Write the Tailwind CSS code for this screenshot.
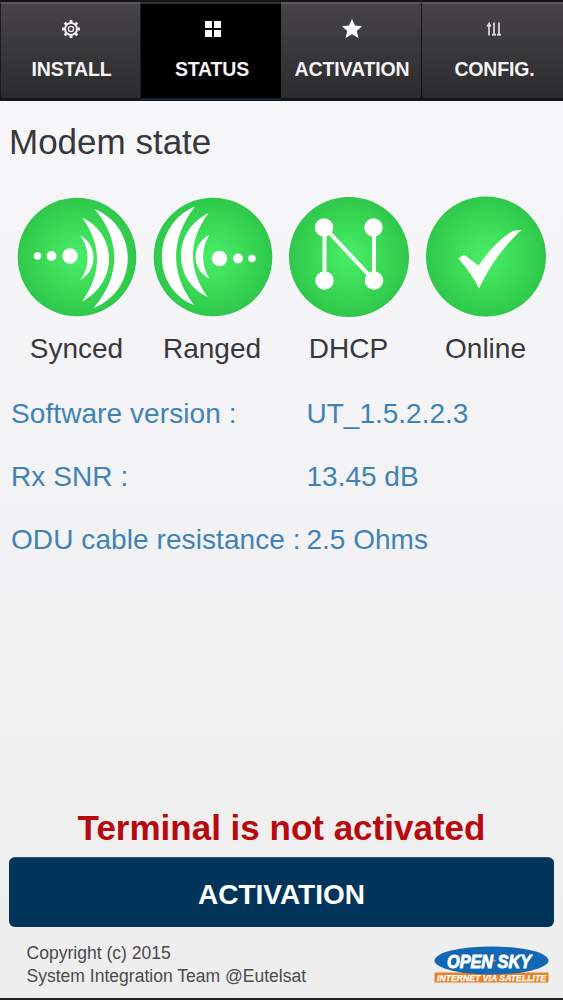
<!DOCTYPE html>
<html lang="en">
<head>
<meta charset="utf-8">
<title>Modem state</title>
<script src="https://cdn.jsdelivr.net/npm/@tailwindcss/browser@4"></script>
</head>
<body class="font-['Liberation_Sans',Arial,sans-serif] bg-[#f2f2f4]">
<main class="w-[563px] h-[1000px] flex flex-col overflow-hidden bg-linear-to-b from-[#f8f8fa] via-[#f3f2f4] to-[#eeeeee] border-b-2 border-[#242428] text-[#38373b]">
  <nav class="h-[101px] shrink-0 grid grid-cols-[141px_140px_140px_142px] bg-[#151417] pt-[2px] pb-[3px] text-[#f5f3f6] font-bold text-[19.500px] tracking-[-0.150px] leading-6">
    <a class="flex flex-col items-center bg-linear-to-b from-[#464447] to-[#2c2b2e] border-t-2 border-t-[#59575a] border-x border-x-[#1b1a1c] pt-[15px]">
      <svg class="w-5 h-5 ml-px" viewBox="0 0 20 20" fill="none" stroke="#f1eff2"><circle cx="10" cy="10" r="6" stroke-width="2"/><circle cx="10" cy="10" r="2.6" stroke-width="1.3"/><path stroke-width="2.8" d="M10 1v2.7M10 16.3V19M1 10h2.700M16.300 10H19M3.640 3.640l1.700 1.700M14.660 14.660l1.700 1.700M3.640 16.360l1.700-1.700M14.660 5.340l1.700-1.700"/></svg>
      <span class="mt-[18px] ml-[2px]">INSTALL</span>
    </a>
    <a class="flex flex-col items-center bg-black border-t-2 border-t-[#302f32] pt-[15px] shadow-[0_2px_0_#10273b]">
      <svg class="w-5 h-5 ml-1" viewBox="0 0 20 20" fill="#fff"><path d="M2 2h7v7H2zM11 2h7v7h-7zM2 11h7v7H2zM11 11h7v7h-7z"/></svg>
      <span class="mt-[18px] ml-[2px]">STATUS</span>
    </a>
    <a class="flex flex-col items-center bg-linear-to-b from-[#464447] to-[#2c2b2e] border-t-2 border-t-[#59575a] pt-[15px]">
      <svg class="w-5 h-5 ml-[2px]" viewBox="0 0 20 20" fill="#fff"><path d="M10 0l3 6.600 7 .700-5.300 4.700 1.800 7L10 15.300 3.500 19l1.800-7L0 7.300l7-.700z"/></svg>
      <span class="mt-[18px] ml-[2px]">ACTIVATION</span>
    </a>
    <a class="flex flex-col items-center bg-linear-to-b from-[#464447] to-[#2c2b2e] border-t-2 border-t-[#59575a] border-l border-l-[#111012] pt-[15px]">
      <svg class="w-5 h-5 ml-[3px]" viewBox="0 0 20 20" fill="none" stroke="#dddbde" stroke-width="1.700"><path d="M5 3.500v13M10 3.500v13M15 3.500v13"/><path stroke-width="1.800" d="M2.800 6.500h4.400M8 15.600h4M13 15.600h4"/></svg>
      <span class="mt-[18px] ml-[4px]">CONFIG.</span>
    </a>
  </nav>

  <h1 class="mt-[21px] ml-[9px] h-10 leading-10 text-[35px]">Modem state</h1>

  <section class="mt-[34px] ml-[8px] w-[548px] grid grid-cols-[137px_135px_138px_138px] text-[28px] leading-8">
    <div class="flex flex-col items-center">
      <svg class="w-[122px] h-[122px]" viewBox="0 0 122 122">
        <defs><radialGradient id="g"><stop offset="0" stop-color="#4aee68"/><stop offset=".5" stop-color="#3cdc57"/><stop offset="1" stop-color="#2fc84b"/></radialGradient></defs>
        <circle cx="61" cy="61" r="59.300" fill="url(#g)"/>
        <g fill="#fff"><circle cx="21.500" cy="60" r="3.700"/><circle cx="35.500" cy="60" r="4.900"/><circle cx="54" cy="60" r="7.700"/>
        <path d="M64 39.500C82 48 82 75 64 84C74 72 74 52 64 39.500zM66 21.500C102 38 102 87 66 105.500C86 77 86 49 66 21.500zM78.500 13C123 31 123 94 77.500 112C105 80 105 44 78.500 13z"/></g>
      </svg>
      <span class="mt-[15px]">Synced</span>
    </div>
    <div class="flex flex-col items-center">
      <svg class="w-[122px] h-[122px]" viewBox="0 0 122 122">
        <circle cx="61" cy="61" r="59.300" fill="url(#g)"/>
        <g fill="#fff"><circle cx="67.500" cy="62.500" r="7.700"/><circle cx="86" cy="62.500" r="4.900"/><circle cx="100" cy="62.500" r="3.700"/>
        <path d="M57.500 39C39 48 39 74 57.500 82.500C49 70 49 52 57.500 39zM56.500 17C20 35 20 84 55.500 101C36 73 36 45 56.500 17zM43 10.500C-1 29 -1 92 42 109C18 77 18 43 43 10.500z"/></g>
      </svg>
      <span class="mt-[15px] mr-px">Ranged</span>
    </div>
    <div class="flex flex-col items-center">
      <svg class="w-[122px] h-[122px]" viewBox="0 0 122 122">
        <circle cx="61" cy="61" r="60" fill="url(#g)"/>
        <path d="M36.500 84.500V31.500L86 84.500V31.500" fill="none" stroke="#fff" stroke-width="4"/>
        <g fill="#fff"><circle cx="36" cy="31.500" r="9.200"/><circle cx="85.500" cy="31.500" r="9.200"/><circle cx="36.500" cy="84.500" r="9.200"/><circle cx="86" cy="84.500" r="9.200"/></g>
      </svg>
      <span class="mt-[15px] mr-px">DHCP</span>
    </div>
    <div class="flex flex-col items-center">
      <svg class="w-[122px] h-[122px]" viewBox="0 0 122 122">
        <circle cx="60" cy="60.500" r="60" fill="url(#g)"/>
        <path fill="#fff" d="M32.500 62.500L38 58.500L52.500 69.500C65 52 75 42 86 35.500Q89 33.500 95.500 34C81 47 66 65 53 92.500Q46 78 32.500 62.500z"/>
      </svg>
      <span class="mt-[15px] mr-[3px]">Online</span>
    </div>
  </section>

  <dl class="mt-[17px] ml-[11px] grid grid-cols-[295.500px_1fr] auto-rows-[63.300px] items-center text-[28px] leading-8 text-[#3f83b5] whitespace-nowrap">
    <dt class="tracking-[0.08px]">Software version :</dt><dd>UT_1.5.2.2.3</dd>
    <dt class="tracking-[0.08px]">Rx SNR :</dt><dd>13.45 dB</dd>
    <dt class="tracking-[0.08px]">ODU cable resistance :</dt><dd>2.5 Ohms</dd>
  </dl>

  <p class="mt-auto text-center text-[35px] leading-10 font-bold text-[#b80a0e]">Terminal is not activated</p>
  <button class="mt-[9px] mx-[9px] h-[70px] shrink-0 rounded-md bg-[#00345b] border-t border-[#2c5778] text-white font-bold text-[28px] pt-[5px]">ACTIVATION</button>
  <footer class="h-[71px] shrink-0 flex justify-between pl-[26.500px] pr-[14px] text-[17.550px] leading-[23px] text-[#4b4a4d]">
    <p class="pt-[15px]">Copyright (c) 2015<br>System Integration Team @Eutelsat</p>
    <svg class="mt-[19px] w-[115px] h-[38px]" viewBox="0 0 115 38" font-family="Liberation Sans, Arial, sans-serif" font-weight="bold" font-style="italic" fill="#fff">
      <rect x="0.500" y="26.500" width="114" height="10" fill="#e98126"/>
      <ellipse cx="57.500" cy="14.500" rx="57" ry="14" fill="#1268b3"/>
      <path d="M58 12.500l5 2-5 2z" fill="#c08468"/>
      <text x="13" y="21.500" font-size="19" stroke="#fff" stroke-width=".9" textLength="84" lengthAdjust="spacingAndGlyphs">OPEN SKY</text>
      <text x="3" y="35" font-size="9" stroke="#fff" stroke-width=".25" textLength="109" lengthAdjust="spacingAndGlyphs">INTERNET VIA SATELLITE</text>
    </svg>
  </footer>
</main>
</body>
</html>
